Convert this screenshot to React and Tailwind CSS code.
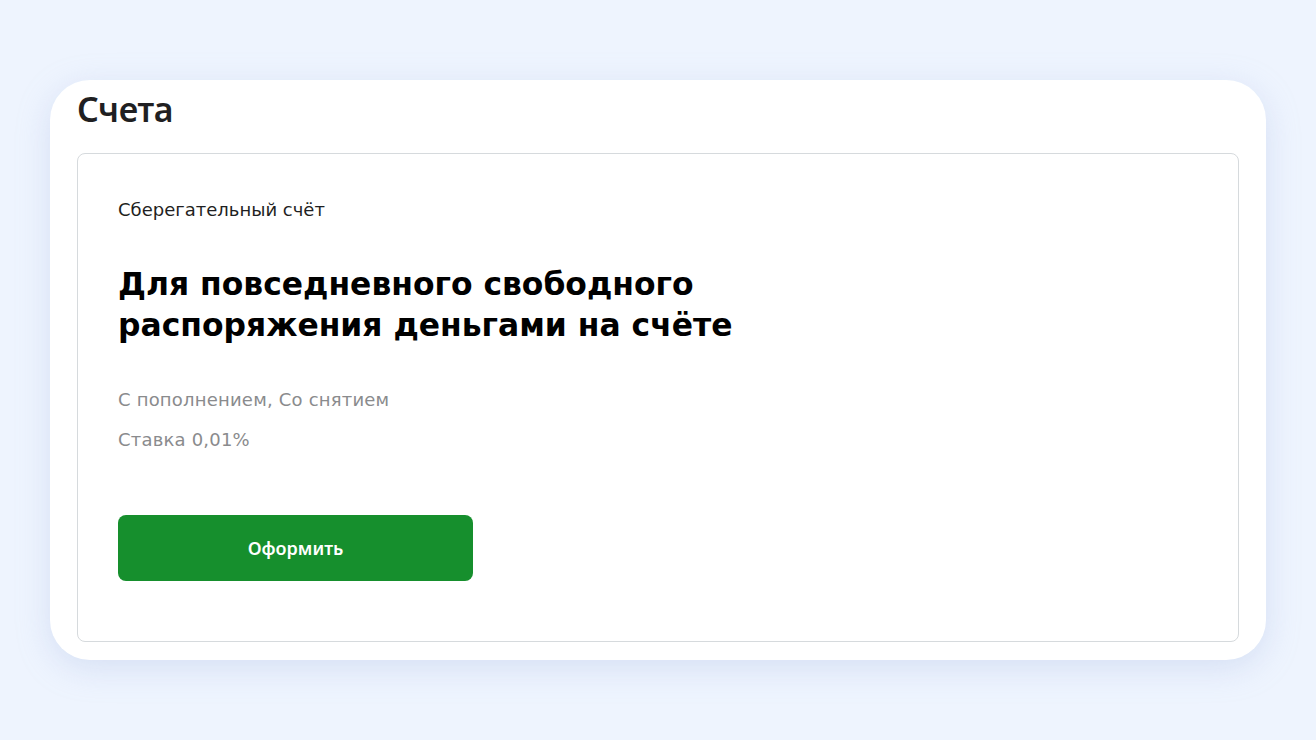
export default function App() {
  return (
    <div className="min-h-screen w-full bg-[#eef4fe] pt-[80px] px-[50px] font-['Noto_Sans',sans-serif]">
      <div className="w-[1216px] h-[580px] rounded-[40px] bg-white shadow-[0_8px_32px_rgba(170,185,225,0.35)] px-[27px] pt-[8px] pb-[18px] flex flex-col">
        {/* Heading */}
        <h1 className="text-[34px] leading-[42px] font-semibold text-[#1f1f22] tracking-[-0.3px]">Счета</h1>

        {/* Account card */}
        <div className="mt-[23px] flex-1 rounded-[8px] border border-[#d6dadd] pl-[40px] pt-[42px] flex flex-col items-start font-['DejaVu_Sans',sans-serif]">
          <div className="text-[18px] leading-[28px] text-[#1f1f22]">Сберегательный счёт</div>
          <h2 className="mt-[40px] text-[31.4px] leading-[41px] font-bold text-black">
            Для повседневного свободного
            <br />
            распоряжения деньгами на счёте
          </h2>
          <div className="mt-[40px] flex flex-col gap-[12px] text-[18px] leading-[28px] tracking-[0.2px] text-[#8a8b8d]">
            <div>С пополнением, Со снятием</div>
            <div>Ставка 0,01%</div>
          </div>
          <button className="mt-[61px] w-[355px] h-[66px] rounded-[8px] bg-[#168f2d] text-white text-[18px] font-semibold font-['Noto_Sans',sans-serif]">
            Оформить
          </button>
        </div>
      </div>
    </div>
  );
}
